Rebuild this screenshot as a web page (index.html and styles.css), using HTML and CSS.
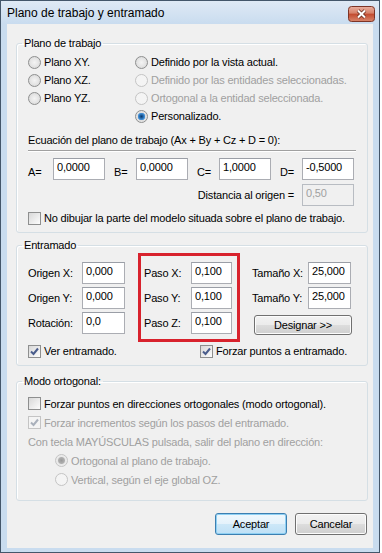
FILE: index.html
```html
<!DOCTYPE html>
<html lang="es">
<head>
  <meta charset="UTF-8">
  <title>Plano de trabajo y entramado</title>
  <link rel="stylesheet" href="styles.css">
</head>
<body>

<div class="window">
  <div class="titlebar">
    <span class="title">Plano de trabajo y entramado</span>
    <span class="close">
      <svg width="27" height="16" viewBox="0 0 27 16">
        <defs>
          <linearGradient id="closeGrad" x1="0" y1="0" x2="0" y2="1">
            <stop offset="0" stop-color="#eab0a0"/>
            <stop offset="0.45" stop-color="#d68068"/>
            <stop offset="0.5" stop-color="#c24a2e"/>
            <stop offset="1" stop-color="#d9866c"/>
          </linearGradient>
        </defs>
        <rect x="0.5" y="0.5" width="26" height="15" rx="3" fill="url(#closeGrad)" stroke="#7d3426"/>
        <path d="M10 4.5 L17 11.5 M17 4.5 L10 11.5" stroke="#6b2a1d" stroke-width="3.6"/>
        <path d="M10 4.5 L17 11.5 M17 4.5 L10 11.5" stroke="#fff" stroke-width="2"/>
      </svg>
    </span>
  </div>

  <div class="client">

    <fieldset class="group plano">
      <legend>Plano de trabajo</legend>
      <div class="radios">
        <label class="opt"><span class="radio"></span>Plano XY.</label>
        <label class="opt"><span class="radio"></span>Definido por la vista actual.</label>
        <label class="opt"><span class="radio"></span>Plano XZ.</label>
        <label class="opt disabled"><span class="radio"></span>Definido por las entidades seleccionadas.</label>
        <label class="opt"><span class="radio"></span>Plano YZ.</label>
        <label class="opt disabled"><span class="radio"></span>Ortogonal a la entidad seleccionada.</label>
        <span></span>
        <label class="opt"><span class="radio checked"></span>Personalizado.</label>
      </div>

      <div class="eq-title">Ecuación del plano de trabajo (Ax + By + Cz + D = 0):</div>

      <div class="coefs">
        <span class="lbl">A=</span><input class="field" value="0,0000">
        <span class="lbl">B=</span><input class="field" value="0,0000">
        <span class="lbl">C=</span><input class="field" value="1,0000">
        <span class="lbl">D=</span><input class="field" value="-0,5000">
      </div>

      <div class="dist">
        <span>Distancia al origen =</span><input class="field" value="0,50" disabled>
      </div>

      <label class="opt check-row">
        <span class="check"></span>No dibujar la parte del modelo situada sobre el plano de trabajo.
      </label>
    </fieldset>

    <fieldset class="group entramado">
      <legend>Entramado</legend>
      <div class="grid-cols">
        <div class="cols origen">
          <span>Origen X:</span><input class="field" value="0,000">
          <span>Origen Y:</span><input class="field" value="0,000">
          <span>Rotación:</span><input class="field" value="0,0">
        </div>
        <div class="cols paso">
          <span>Paso X:</span><input class="field" value="0,100">
          <span>Paso Y:</span><input class="field" value="0,100">
          <span>Paso Z:</span><input class="field" value="0,100">
        </div>
        <div class="cols tamano">
          <span>Tamaño X:</span><input class="field" value="25,000">
          <span>Tamaño Y:</span><input class="field" value="25,000">
          <button class="btn designar">Designar &gt;&gt;</button>
        </div>
      </div>
      <div class="grid-checks">
        <label class="opt">
          <span class="check">
            <svg width="11" height="11" viewBox="0 0 11 11"><path d="M2 5.5 L4.5 8 L9 2.5" fill="none" stroke="#4a5d8c" stroke-width="2"/></svg>
          </span>Ver entramado.
        </label>
        <label class="opt">
          <span class="check">
            <svg width="11" height="11" viewBox="0 0 11 11"><path d="M2 5.5 L4.5 8 L9 2.5" fill="none" stroke="#4a5d8c" stroke-width="2"/></svg>
          </span>Forzar puntos a entramado.
        </label>
      </div>
    </fieldset>

    <fieldset class="group orto">
      <legend>Modo ortogonal:</legend>
      <label class="opt row"><span class="check"></span>Forzar puntos en direcciones ortogonales (modo ortogonal).</label>
      <label class="opt row disabled">
        <span class="check">
          <svg width="11" height="11" viewBox="0 0 11 11"><path d="M2 5.5 L4.5 8 L9 2.5" fill="none" stroke="#a9b0bb" stroke-width="2"/></svg>
        </span>Forzar incrementos según los pasos del entramado.
      </label>
      <div class="row disabled text">Con tecla MAYÚSCULAS pulsada, salir del plano en dirección:</div>
      <label class="opt row sub disabled"><span class="radio checked"></span>Ortogonal al plano de trabajo.</label>
      <label class="opt row sub disabled"><span class="radio"></span>Vertical, según el eje global OZ.</label>
    </fieldset>

    <div class="actions">
      <button class="btn default">Aceptar</button>
      <button class="btn">Cancelar</button>
    </div>

  </div>
</div>

</body>
</html>
```

FILE: styles.css
```css
body {
  margin: 0;
  background-color: #ffffff;
  font-family: "Liberation Sans", Arial, sans-serif;
  font-size: 11px;
  letter-spacing: -0.18px;
  color: #000;
}

.window {
  width: 380px;
  height: 553px;
  box-sizing: border-box;
  border: 1px solid #44566a;
  background-color: #c9dcef;
  padding: 0 6px 4px 6px;
  display: flex;
  flex-direction: column;
}

.titlebar {
  height: 23px;
  margin: 0 -6px;
  padding: 0 4px 0 6px;
  display: flex;
  align-items: center;
  justify-content: space-between;
  background: linear-gradient(#dfe9f5, #c9dcef);
}
.title {
  font-size: 12px;
  letter-spacing: 0;
  margin-top: 1px;
}
.close {
  display: flex;
  margin-top: 2px;
}

.client {
  flex: 1;
  background-color: #f0f0f0;
  padding-top: 12px;
}

/* group boxes */
.group {
  margin: 0 0 0 9px;
  width: 352px;
  box-sizing: border-box;
  padding: 0 11px;
  border: 1px solid #d5dfe5;
  border-radius: 3px;
  box-shadow: inset 1px 1px #fff;
}
.group legend {
  padding: 0 2px;
  margin-left: -6px;
  line-height: 14px;
}

.opt {
  display: flex;
  align-items: center;
  white-space: nowrap;
}
.disabled {
  color: #a0a0a0;
}

.radio {
  flex: none;
  width: 13px;
  height: 13px;
  box-sizing: border-box;
  border-radius: 50%;
  border: 1px solid #8e8f8f;
  background: radial-gradient(circle, #f4f4f4 0, #e2e2e2 60%, #cfcfcf 100%);
  margin-right: 3px;
}
.radio.checked {
  background: radial-gradient(circle, #0d3a6a 0, #1d5fa0 1.5px, #4f9ade 3.5px, #dedede 4px, #f3f3f3 100%);
}
.disabled .radio {
  border-color: #c4c4c4;
  background: #f4f4f4;
}
.disabled .radio.checked {
  background: radial-gradient(circle, #9a9a9a 0, #b0b0b0 3px, #e8e8e8 4px, #f4f4f4 100%);
}

.check {
  flex: none;
  width: 13px;
  height: 13px;
  box-sizing: border-box;
  border: 1px solid #8e8f8f;
  background: linear-gradient(135deg, #d8d8d8, #fdfdfd);
  margin-right: 3px;
  display: flex;
  align-items: center;
  justify-content: center;
}
.disabled .check {
  border-color: #c4c4c4;
  background: #f4f4f4;
}

.field {
  box-sizing: border-box;
  height: 22px;
  border: 1px solid #abadb3;
  border-top-color: #9a9ea6;
  background: #fff;
  font: inherit;
  letter-spacing: inherit;
  color: #000;
  padding: 0 3px 4px 3px;
  margin: 0;
}
.field:disabled {
  background: #f0f0f0;
  border-color: #b8bcc2;
  color: #a0a0a0;
}

/* plano de trabajo */
.radios {
  display: grid;
  grid-template-columns: 107px auto;
  grid-auto-rows: 18px;
  padding-top: 3px;
}
.eq-title {
  margin-top: 7px;
  line-height: 16px;
  padding-bottom: 2px;
  border-bottom: 1px solid #a0a0a0;
  box-shadow: 0 1px #fff;
}
.coefs {
  display: flex;
  align-items: center;
  margin-top: 7px;
}
.coefs .lbl {
  width: 22px;
  margin-left: 9px;
  padding-top: 5px;
}
.coefs .lbl:first-child {
  width: 25px;
  margin-left: 0;
}
.coefs .field {
  width: 52px;
}
.dist {
  display: flex;
  justify-content: flex-end;
  align-items: center;
  gap: 8px;
  margin-top: 4px;
  padding-right: 2px;
}
.dist .field {
  width: 52px;
}
.check-row {
  margin-top: 3px;
  height: 18px;
  padding-bottom: 5px;
}

/* entramado */
.grid-cols {
  display: flex;
  padding-top: 1px;
}
.cols {
  display: grid;
  grid-auto-rows: 22px;
  row-gap: 3px;
  align-items: center;
  white-space: nowrap;
}
.origen {
  grid-template-columns: 54px 43px;
  padding-top: 9px;
}
.paso {
  grid-template-columns: 47px 41px;
  margin-left: 13px;
  border: 3px solid #d8222d;
  padding: 6px 5px 5px 3px;
}
.tamano {
  grid-template-columns: 56px 43px;
  margin-left: 12px;
  padding-top: 9px;
}
.designar {
  grid-column: 1 / 3;
  margin-left: 2px;
  height: 20px;
  width: 98px;
  align-self: start;
  margin-top: 3px;
}
.grid-checks {
  display: grid;
  grid-template-columns: 172px auto;
  height: 18px;
  padding-bottom: 5px;
}

/* modo ortogonal */
.entramado {
  margin-top: 5px;
}
.orto {
  margin-top: 8px;
  padding-top: 6px;
  padding-bottom: 11px;
}
.orto .row {
  height: 19px;
  display: flex;
  align-items: center;
  white-space: nowrap;
}
.orto .sub {
  padding-left: 27px;
}

/* buttons */
.btn {
  font: inherit;
  letter-spacing: inherit;
  color: #000;
  border: 1px solid #707070;
  border-radius: 3px;
  background: linear-gradient(#f2f2f2 0%, #ebebeb 50%, #dddddd 50%, #cfcfcf 100%);
  box-shadow: inset 0 0 0 1px #fcfcfc;
  padding: 0;
}
.actions {
  display: flex;
  justify-content: flex-end;
  gap: 8px;
  margin-top: 12px;
  padding-right: 6px;
}
.actions .btn {
  width: 72px;
  height: 22px;
}
.btn.default {
  border-color: #3c7fb1;
  box-shadow: inset 0 0 0 1px #8fd0f3;
  background: linear-gradient(#f0f8fd 0%, #e4f2fb 50%, #cde8f8 50%, #bfe0f6 100%);
}
```
